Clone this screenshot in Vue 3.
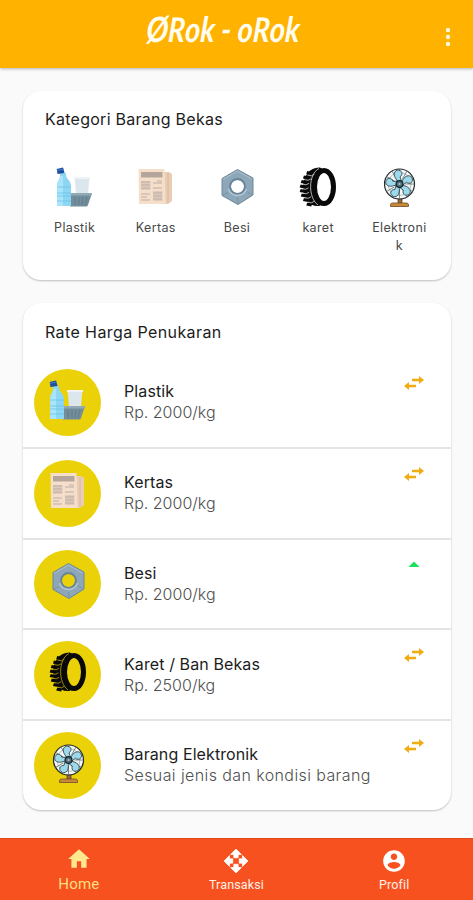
<script setup>
import { h } from 'vue'

const el = (tag, attrs) => h(tag, attrs)

const range = (n) => Array.from({ length: n }, (_, i) => i)

const drawings = {
  bottle: () => [
    el('path', { d: 'M19 10h16l-1 4-1 14H21l-1-14z', fill: '#dbe6ed' }),
    el('path', { d: 'M19 10h16v2H19z', fill: '#edf3f6' }),
    el('path', { d: 'M15 26h22l-4 12a2 2 0 0 1-2 1.500H15z', fill: '#738d9b' }),
    el('path', { d: 'M15 26h22l-.8 2.400H15z', fill: '#91aab5' }),
    el('path', { d: 'M20 30v8M24 30v8M28 30l-1 8M32 30l-2 8', stroke: '#5d7888', 'stroke-width': 0.8, fill: 'none' }),
    el('path', { d: 'M5 6h6v3c1 3 5 5 5 10v20H2V19c0-5 3-7 3-10z', fill: '#8dd7f5' }),
    el('path', { d: 'M5 9h3v30H2V19c0-4 3-6 3-10z', fill: '#a9e5fa' }),
    el('path', { d: 'M2 20h14M2 26h14M2 29h14M2 34h14', stroke: '#66bfe5', 'stroke-width': 0.7, fill: 'none' }),
    el('path', { d: 'M1.700 2 8 .5l1.500 5.500-7 1z', fill: '#1d50a0' }),
    el('path', { d: 'M2 3.500 8.500 2', stroke: '#3f7cc5', 'stroke-width': 1 })
  ],
  paper: () => [
    el('path', { d: 'M28 5h5l3 2v27l-4 3h-5z', fill: '#e9cdb5' }),
    el('path', { d: 'M32 6v30', stroke: '#d9b89d', 'stroke-width': 1 }),
    el('path', { d: 'M2.500 2h26l1 35H3z', fill: '#f5dfcb' }),
    el('path', { d: 'M5 5h21.500v5.500H5z', fill: '#b5a69d' }),
    el('path', { d: 'M5 14h9.500v9H5zM17 24h9.500v10H17z', fill: '#dfcbbd' }),
    el('path', { d: 'M5 15h9M5 18h9M5 21h9M21 14h5M17 16h9M17 21h9M5 27h9M5 30h6M5 33h9M17 26h9M17 29h9M17 32h9', stroke: '#bdaea3', 'stroke-width': 1.1 })
  ],
  nut: () => [
    el('path', { 'fill-rule': 'evenodd', d: 'M20.500 2.500 36 11v17L21 37.500 5 28.500V11.500zM20.500 12.500a7 7 0 1 0 0 14 7 7 0 0 0 0-14z', fill: '#8da7b9', stroke: '#6c879b', 'stroke-width': 1, 'stroke-linejoin': 'round' }),
    el('path', { d: 'm6 12.500 14.500-8.500L34.500 12', fill: 'none', stroke: '#a5b9c6', 'stroke-width': 1.2 }),
    el('circle', { cx: 20.5, cy: 19.5, r: 7.5, fill: 'none', stroke: '#68859a', 'stroke-width': 1.8 }),
    el('path', { d: 'M11.500 22a9.500 9.500 0 0 0 18 0', fill: 'none', stroke: '#b4c7d2', 'stroke-width': 1.4 }),
    el('path', { d: 'm21 36-.5-5M6 28l5-2.500M34.500 27.500l-4-2.500', stroke: '#718b9d', 'stroke-width': 0.8 })
  ],
  tyre: () => [
    el('path', { d: 'M22 .5C12 0 5 9 5 20s6 20 16 19l7-3-2-33z', fill: '#090909' }),
    ...range(8).map((i) => {
      const y = 4 + i * 4.5
      const x = 2.5 + Math.pow(i - 3.5, 2) * 0.55
      return el('path', { d: `M${x} ${y}l5 1-1 3-5-1z`, fill: '#090909' })
    }),
    ...range(7).map((i) => {
      const y = 6.5 + i * 4.5
      const x = 3.5 + Math.pow(i - 3, 2) * 0.65
      return el('path', { d: `M${x} ${y + 1.5}l4 .8 3 -1.500`, class: 'tread' })
    }),
    el('path', { d: 'M21 1.500C10 7 10 31 20 38', class: 'tread' }),
    el('ellipse', { cx: 26, cy: 20, rx: 9.5, ry: 16.5, class: 'hub' })
  ],
  fan: () => [
    el('path', { d: 'M19 31h4v5h-4z', fill: '#9b6a3d', stroke: '#443126', 'stroke-width': 0.7 }),
    el('path', { d: 'M13.500 36h14a2 2 0 0 1 2 2v1.500h-18V38q0-2 2-2', fill: '#c78a38', stroke: '#80552e', 'stroke-width': 0.9 }),
    el('circle', { cx: 20.5, cy: 17, r: 15, fill: '#f4f8f7', stroke: '#24282a', 'stroke-width': 1.2 }),
    el('circle', { cx: 20.5, cy: 17, r: 11.5, fill: 'none', stroke: '#87949a', 'stroke-width': 0.6 }),
    ...range(12).map((i) => el('path', { d: 'M20.500 2v9', transform: `rotate(${i * 30} 20.5 17)`, stroke: '#586369', 'stroke-width': 0.7 })),
    ...range(5).map((i) => el('path', {
      d: 'M20 15C15 9 16 4 20 3c5 0 6 5 2 7l1 5z',
      transform: `rotate(${i * 72 - 8} 20.5 17)`,
      fill: '#9cdaeb', stroke: '#2f4146', 'stroke-width': 0.8
    })),
    el('circle', { cx: 20.5, cy: 17, r: 3.4, fill: '#506f7a', stroke: '#17242a', 'stroke-width': 1.2 }),
    el('circle', { cx: 20.5, cy: 17, r: 1, fill: '#b7c8cc' })
  ]
}

const ItemIcon = (props) =>
  h('svg', { viewBox: '0 0 40 40', width: 40, height: 40, 'aria-hidden': 'true' }, drawings[props.name]())
ItemIcon.props = ['name']

const categories = [
  { icon: 'bottle', label: 'Plastik' },
  { icon: 'paper', label: 'Kertas' },
  { icon: 'nut', label: 'Besi' },
  { icon: 'tyre', label: 'karet' },
  { icon: 'fan', label: 'Elektronik' }
]

const rates = [
  { icon: 'bottle', name: 'Plastik', price: 'Rp. 2000/kg', trend: 'flat' },
  { icon: 'paper', name: 'Kertas', price: 'Rp. 2000/kg', trend: 'flat' },
  { icon: 'nut', name: 'Besi', price: 'Rp. 2000/kg', trend: 'up' },
  { icon: 'tyre', name: 'Karet / Ban Bekas', price: 'Rp. 2500/kg', trend: 'flat' },
  { icon: 'fan', name: 'Barang Elektronik', price: 'Sesuai jenis dan kondisi barang', trend: 'flat' }
]

const tabs = [
  { label: 'Home', active: true, path: 'M10 20v-6h4v6h5v-8h3L12 3 2 12h3v8z' },
  { label: 'Transaksi', bold: true, path: 'M10 9h4V6h3l-5-5-5 5h3v3zm-1 1H6V7l-5 5 5 5v-3h3v-4zm14 2l-5-5v3h-3v4h3v3l5-5zm-9 3h-4v3H7l5 5 5-5h-3v-3z' },
  { label: 'Profil', path: 'M12 2C6.480 2 2 6.480 2 12s4.480 10 10 10 10-4.480 10-10S17.520 2 12 2zm0 3c1.660 0 3 1.340 3 3s-1.340 3-3 3-3-1.340-3-3 1.340-3 3-3zm0 14.200c-2.500 0-4.710-1.280-6-3.220.030-1.990 4-3.080 6-3.080 1.990 0 5.970 1.090 6 3.080-1.290 1.940-3.500 3.220-6 3.220z' }
]
</script>

<template>
  <div class="app">
    <header class="bar">
      <h1 class="brand">Ø<b>R</b>ok - o<b>R</b>ok</h1>
      <svg class="more" viewBox="0 0 6 20" width="6" height="20">
        <circle cx="3" cy="3" r="2.200" /><circle cx="3" cy="10" r="2.200" /><circle cx="3" cy="17" r="2.200" />
      </svg>
    </header>

    <main class="content">
      <section class="card categories">
        <h2>Kategori Barang Bekas</h2>
        <ul class="cat-list">
          <li v-for="c in categories" :key="c.label">
            <ItemIcon :name="c.icon" />
            <span>{{ c.label }}</span>
          </li>
        </ul>
      </section>

      <section class="card rates">
        <h2>Rate Harga Penukaran</h2>
        <ul class="rate-list">
          <li v-for="r in rates" :key="r.name">
            <div class="disc"><ItemIcon :name="r.icon" /></div>
            <div class="info">
              <strong>{{ r.name }}</strong>
              <span :class="{ note: r.icon === 'fan' }">{{ r.price }}</span>
            </div>
            <svg v-if="r.trend === 'flat'" class="trend" viewBox="0 0 20 14" width="20" height="14">
              <path d="M8 2.800h7V0l5 4-5 4V5.200H8zM12 8.800H5V6L0 10l5 4v-2.800h7z" fill="#efad12" />
            </svg>
            <svg v-else class="trend" viewBox="0 0 20 14" width="20" height="14">
              <path d="M4.500 9 10 3.500 15.500 9z" fill="#18e45b" />
            </svg>
          </li>
        </ul>
      </section>
    </main>

    <nav class="tabs">
      <a v-for="t in tabs" :key="t.label" :class="{ active: t.active, bold: t.bold }">
        <svg viewBox="0 0 24 24"><path fill-rule="evenodd" :d="t.path" /></svg>
        <span>{{ t.label }}</span>
      </a>
    </nav>
  </div>
</template>

<style>
body {
  margin: 0;
}
</style>

<style scoped>
.app {
  box-sizing: border-box;
  width: 473px;
  height: 900px;
  display: flex;
  flex-direction: column;
  overflow: hidden;
  background: #fafafa;
  color: #1c1c1c;
  font-family: Inter, "Open Sans", sans-serif;
}

h1,
h2,
ul {
  margin: 0;
  padding: 0;
  list-style: none;
  font-weight: 400;
}

.bar {
  flex: none;
  height: 68px;
  display: grid;
  grid-template-columns: 146px 1fr 28px;
  background: #ffb300;
  box-shadow: 0 1px 3px rgba(0, 0, 0, 0.28);
}

.brand {
  grid-column: 2;
  justify-self: start;
  margin-top: 8px;
  color: #fffdf0;
  font: italic 700 35px/40px Lato, sans-serif;
  white-space: nowrap;
  transform: scaleX(0.83) skewX(-5deg);
  transform-origin: left center;
}

.brand b {
  font-size: 34px;
  font-weight: 700;
}

.more {
  margin-top: 27px;
  fill: #fff8e0;
}

.content {
  flex: 1;
  display: flex;
  flex-direction: column;
  gap: 23px;
  padding: 23px 22px 0 23px;
}

.card {
  box-sizing: border-box;
  border-radius: 18px;
  background: #fff;
  box-shadow: 0 1px 2px rgba(0, 0, 0, 0.24);
}

.card h2 {
  padding-left: 22px;
  font-size: 16px;
  line-height: 24px;
  letter-spacing: 0.26px;
}

.categories {
  height: 189px;
  padding-top: 16px;
}

.rates {
  height: 507px;
  padding-top: 17px;
}

.rates h2 {
  letter-spacing: 0.4px;
}

.cat-list {
  display: grid;
  grid-template-columns: repeat(5, 81.2px);
  margin: 36px 0 0 11px;
}

.cat-list li {
  display: flex;
  flex-direction: column;
  align-items: center;
  gap: 12px;
}

.cat-list span {
  width: 57px;
  color: #484848;
  font-size: 12.5px;
  line-height: 18px;
  letter-spacing: 0.35px;
  text-align: center;
  overflow-wrap: anywhere;
}

.rate-list {
  margin-top: 14px;
}

.rate-list li {
  box-sizing: border-box;
  height: 90.75px;
  display: flex;
  align-items: center;
  padding: 0 27px 0 11px;
  border-bottom: 2px solid #e4e4e4;
}

.rate-list li:last-child {
  border-bottom-color: transparent;
}

.disc {
  flex: none;
  box-sizing: border-box;
  width: 67px;
  height: 67px;
  padding-bottom: 5px;
  display: flex;
  align-items: center;
  justify-content: center;
  border-radius: 50%;
  background: #ebd107;
}

.info {
  flex: 1;
  display: flex;
  flex-direction: column;
  padding-left: 23px;
  font-size: 16px;
  line-height: 21px;
}

.info strong {
  font-weight: 400;
  letter-spacing: 0.1px;
}

.info span {
  color: #505050;
  font-weight: 300;
}

.info .note {
  letter-spacing: 0.4px;
}

.trend {
  align-self: flex-start;
  margin-top: 18px;
}

:deep(.tread) {
  fill: none;
  stroke: #d8d8d8;
  stroke-width: 0.8;
}

:deep(.hub) {
  fill: #fff;
  stroke: #090909;
  stroke-width: 5;
}

.disc :deep(.hub) {
  fill: #ebd107;
}

.disc :deep(.tread) {
  stroke: #bca70c;
}

.tabs {
  flex: none;
  height: 62px;
  display: grid;
  grid-template-columns: repeat(3, 1fr);
  background: #f7511f;
  box-shadow: inset 0 1px 0 #df4a1d;
}

.tabs a {
  display: flex;
  flex-direction: column;
  align-items: center;
  padding-top: 10px;
  color: #fff1e9;
  font: 400 12.5px/16px Roboto, sans-serif;
  letter-spacing: 0.15px;
}

.tabs svg {
  width: 26px;
  height: 26px;
  margin-bottom: 3px;
  fill: #fff;
}

.tabs .bold path {
  stroke: #fff;
  stroke-width: 0.7;
}

.tabs .active {
  padding-top: 8px;
  color: #ffdf80;
  font-size: 15px;
  line-height: 18px;
}

.tabs .active svg {
  fill: #ffe98f;
}
</style>
